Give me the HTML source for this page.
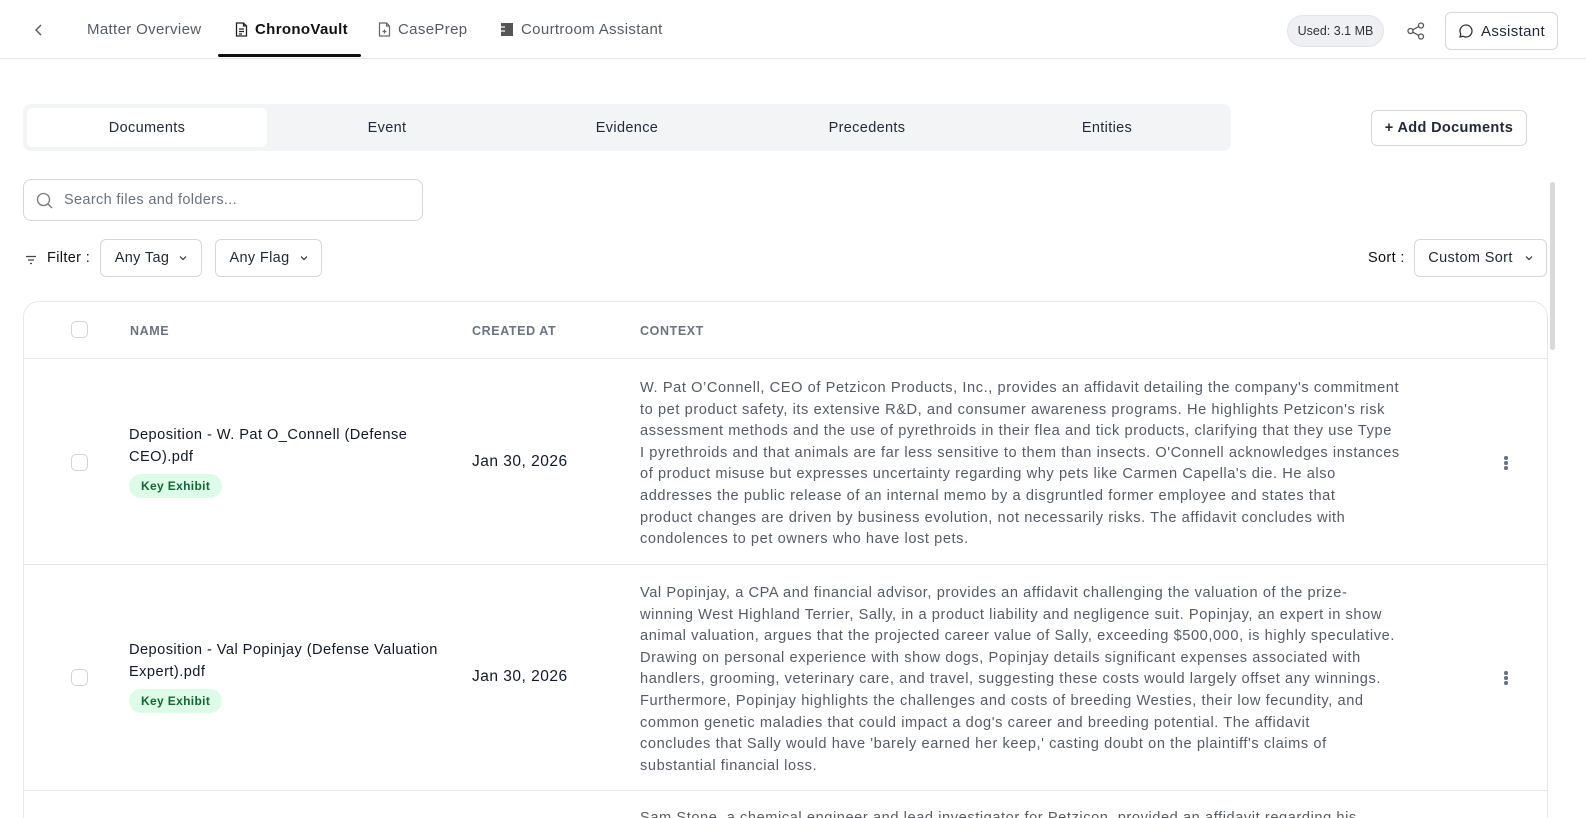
<!DOCTYPE html>
<html style="height:818px;overflow:hidden"><head><meta charset="utf-8"><style>
*{box-sizing:border-box;margin:0;padding:0}
body{width:1586px;height:818px;overflow:hidden;background:#fff;font-family:"Liberation Sans",sans-serif;color:#1f2937;position:relative;letter-spacing:.35px}
.abs{position:absolute}
.nav{left:0;top:0;width:1586px;height:59px;border-bottom:1px solid #e5e7eb;background:#fff}
.navtab{top:21px;font-size:15px;color:#555b66;display:flex;align-items:center;gap:7px;white-space:nowrap}
.btn{border:1px solid #d4d7de;border-radius:6px;background:#fff;display:flex;align-items:center;justify-content:center;font-size:14.5px;color:#1f2937;white-space:nowrap}
.tabs{left:23px;top:104px;width:1208px;height:47px;background:#f3f4f6;border-radius:8px}
.tab{top:0;height:47px;width:240px;display:flex;align-items:center;justify-content:center;font-size:14.5px;color:#1f2937}
.table{left:23px;top:301px;width:1525px;height:540px;border:1px solid #e5e7eb;border-radius:16px}
.th{top:324px;font-size:12.5px;font-weight:bold;color:#6b7280;letter-spacing:.6px}
.cb{width:17px;height:17px;border:1px solid #cfd3da;border-radius:5px;background:#fff}
.hr{left:24px;width:1523px;height:1px;background:#e5e7eb}
.ctx{left:640px;font-size:14.6px;line-height:21.6px;color:#555b66;white-space:nowrap;letter-spacing:.58px}
.name{left:129px;font-size:14.6px;line-height:22px;color:#111827;letter-spacing:.45px}
.date{left:472px;font-size:15.5px;color:#111827;letter-spacing:.5px}
.badge{left:129px;height:24px;padding:0 12px;border-radius:12px;background:#dcfce7;color:#166534;font-size:12px;font-weight:bold;display:flex;align-items:center}
.keb{left:1504px;width:4px}
.keb i{display:block;width:3.5px;height:3.5px;border-radius:50%;background:#6b7280;margin-bottom:1.5px}
</style></head><body>
<div class="abs nav"></div>
<div class="abs" style="left:34px;top:22px;font-size:18px;color:#555">
<svg width="10" height="16" viewBox="0 0 10 16"><path d="M7 3L2 8l5 5" fill="none" stroke="#555" stroke-width="1.4"/></svg></div>
<div class="abs navtab" style="left:87px">Matter Overview</div>
<div class="abs navtab" style="left:235px;color:#111;font-weight:bold">
<svg width="13" height="15" viewBox="0 0 13 15"><path d="M1.5 1h7l3 3v10h-10z M8.5 1v3h3 M4 7h5M4 9.5h5M4 12h3" fill="none" stroke="#222" stroke-width="1.3"/></svg>ChronoVault</div>
<div class="abs" style="left:218px;top:54px;width:143px;height:3px;background:#111;border-radius:2px"></div>
<div class="abs navtab" style="left:378px">
<svg width="13" height="15" viewBox="0 0 13 15"><path d="M1.5 1h7l3 3v10h-10z M8.5 1v3h3 M6.5 7.5v4M4.5 9.5h4" fill="none" stroke="#666" stroke-width="1.2"/></svg>CasePrep</div>
<div class="abs navtab" style="left:500px">
<svg width="14" height="15" viewBox="0 0 14 15"><rect x="1" y="1" width="12" height="13" fill="#555"/><path d="M1 5h4M1 9h4" stroke="#fff" stroke-width="1.3"/></svg>Courtroom Assistant</div>
<div class="abs" style="left:1287px;top:15px;width:97px;height:32px;border-radius:16px;background:#eef0f3;border:1px solid #e2e4e8;font-size:12.5px;color:#333;display:flex;align-items:center;justify-content:center;letter-spacing:0">Used: 3.1 MB</div>
<div class="abs" style="left:1406px;top:21px"><svg width="20" height="20" viewBox="0 0 20 20" fill="none" stroke="#555" stroke-width="1.3"><circle cx="15" cy="4.5" r="2.5"/><circle cx="4.5" cy="10" r="2.5"/><circle cx="15" cy="15.5" r="2.5"/><path d="M6.8 8.8l6-3.2M6.8 11.2l6 3.2"/></svg></div>
<div class="abs btn" style="left:1445px;top:12px;width:113px;height:38px;font-size:15px;gap:7px">
<svg width="16" height="16" viewBox="0 0 16 16"><path d="M8 2a6 6 0 1 1-3 11.2L2 14l.8-3A6 6 0 0 1 8 2z" fill="none" stroke="#333" stroke-width="1.3"/></svg>Assistant</div>

<div class="abs tabs">
<div class="abs" style="left:4px;top:4px;width:240px;height:39px;background:#fff;border-radius:6px"></div>
<div class="abs tab" style="left:4px">Documents</div>
<div class="abs tab" style="left:244px">Event</div>
<div class="abs tab" style="left:484px">Evidence</div>
<div class="abs tab" style="left:724px">Precedents</div>
<div class="abs tab" style="left:964px">Entities</div>
</div>
<div class="abs btn" style="left:1371px;top:110px;width:156px;height:36px;font-weight:bold;font-size:14.5px">+ Add Documents</div>

<div class="abs" style="left:23px;top:179px;width:400px;height:42px;border:1px solid #d4d7de;border-radius:8px"></div>
<div class="abs" style="left:36px;top:192px"><svg width="17" height="17" viewBox="0 0 17 17" fill="none" stroke="#777" stroke-width="1.3"><circle cx="7.5" cy="7.5" r="6"/><path d="M12 12l4 4"/></svg></div>
<div class="abs" style="left:64px;top:192px;font-size:14.5px;color:#6b7280">Search files and folders...</div>

<div class="abs" style="left:25px;top:252px"><svg width="12" height="10" viewBox="0 0 12 10" stroke="#444" stroke-width="1.3"><path d="M1 1.5h10M3 5h6M5 8.5h2"/></svg></div>
<div class="abs" style="left:47px;top:250px;font-size:14.5px;color:#111">Filter :</div>
<div class="abs btn" style="left:100px;top:239px;width:102px;height:38px;gap:10px">Any Tag <svg width="8" height="6" viewBox="0 0 8 6"><path d="M1 1.5l3 3 3-3" fill="none" stroke="#333" stroke-width="1.2"/></svg></div>
<div class="abs btn" style="left:215px;top:239px;width:107px;height:38px;gap:10px">Any Flag <svg width="8" height="6" viewBox="0 0 8 6"><path d="M1 1.5l3 3 3-3" fill="none" stroke="#333" stroke-width="1.2"/></svg></div>
<div class="abs" style="left:1368px;top:250px;font-size:14.5px;color:#111">Sort :</div>
<div class="abs btn" style="left:1414px;top:239px;width:133px;height:38px;gap:12px">Custom Sort <svg width="8" height="6" viewBox="0 0 8 6"><path d="M1 1.5l3 3 3-3" fill="none" stroke="#333" stroke-width="1.2"/></svg></div>

<div class="abs" style="left:1550px;top:182px;width:5px;height:168px;background:#d9d9d9;border-radius:3px"></div>

<div class="abs table"></div>
<div class="abs cb" style="left:71px;top:321px"></div>
<div class="abs th" style="left:130px">NAME</div>
<div class="abs th" style="left:472px">CREATED AT</div>
<div class="abs th" style="left:640px">CONTEXT</div>
<div class="abs hr" style="top:358px"></div>

<div class="abs cb" style="left:71px;top:454px"></div>
<div class="abs name" style="top:424px">Deposition - W. Pat O_Connell (Defense<br>CEO).pdf</div>
<div class="abs badge" style="top:474px">Key Exhibit</div>
<div class="abs date" style="top:453px">Jan 30, 2026</div>
<div class="abs ctx" style="top:378px">W. Pat O’Connell, CEO of Petzicon Products, Inc., provides an affidavit detailing the company's commitment<br>to pet product safety, its extensive R&amp;D, and consumer awareness programs. He highlights Petzicon's risk<br>assessment methods and the use of pyrethroids in their flea and tick products, clarifying that they use Type<br>I pyrethroids and that animals are far less sensitive to them than insects. O'Connell acknowledges instances<br>of product misuse but expresses uncertainty regarding why pets like Carmen Capella's die. He also<br>addresses the public release of an internal memo by a disgruntled former employee and states that<br>product changes are driven by business evolution, not necessarily risks. The affidavit concludes with<br>condolences to pet owners who have lost pets.</div>
<div class="abs keb" style="top:456px"><i></i><i></i><i></i></div>
<div class="abs hr" style="top:564px"></div>

<div class="abs cb" style="left:71px;top:669px"></div>
<div class="abs name" style="top:639px">Deposition - Val Popinjay (Defense Valuation<br>Expert).pdf</div>
<div class="abs badge" style="top:689px">Key Exhibit</div>
<div class="abs date" style="top:668px">Jan 30, 2026</div>
<div class="abs ctx" style="top:583px">Val Popinjay, a CPA and financial advisor, provides an affidavit challenging the valuation of the prize-<br>winning West Highland Terrier, Sally, in a product liability and negligence suit. Popinjay, an expert in show<br>animal valuation, argues that the projected career value of Sally, exceeding $500,000, is highly speculative.<br>Drawing on personal experience with show dogs, Popinjay details significant expenses associated with<br>handlers, grooming, veterinary care, and travel, suggesting these costs would largely offset any winnings.<br>Furthermore, Popinjay highlights the challenges and costs of breeding Westies, their low fecundity, and<br>common genetic maladies that could impact a dog's career and breeding potential. The affidavit<br>concludes that Sally would have 'barely earned her keep,' casting doubt on the plaintiff's claims of<br>substantial financial loss.</div>
<div class="abs keb" style="top:671px"><i></i><i></i><i></i></div>
<div class="abs hr" style="top:790px"></div>
<div class="abs ctx" style="top:808px">Sam Stone, a chemical engineer and lead investigator for Petzicon, provided an affidavit regarding his</div>
</body></html>
